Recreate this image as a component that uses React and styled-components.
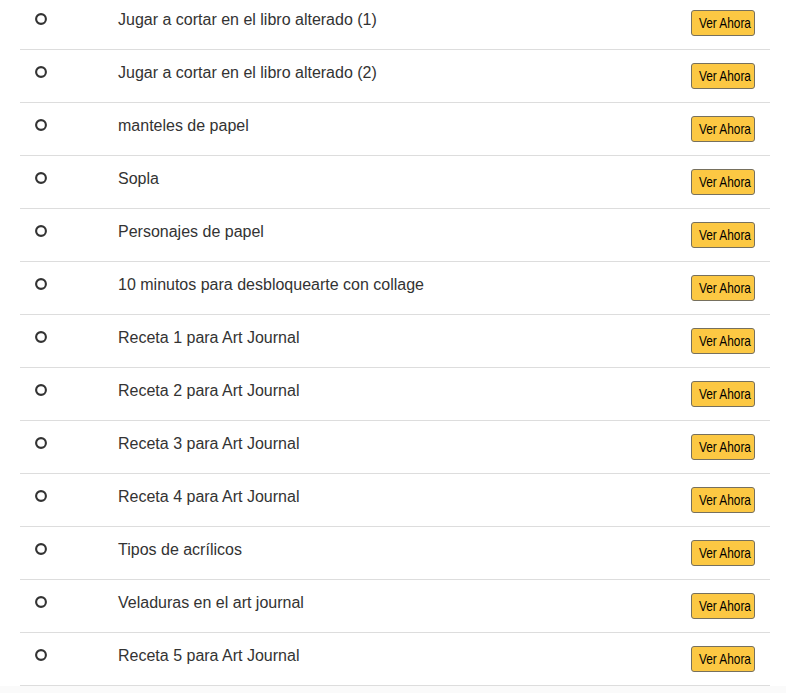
import React from "react";
import styled, { createGlobalStyle } from "styled-components";

const Global = createGlobalStyle`
  html, body { margin: 0; padding: 0; background: #ffffff; }
  body { font-family: "Liberation Sans", Arial, sans-serif; color: #333; }
`;

const Page = styled.div`
  width: 786px;
  height: 693px;
  overflow: hidden;
  background: #fafafa;
`;

const List = styled.ul`
  list-style: none;
  margin: -3px 0 0 0;
  padding: 0 16px 0 20px;
  background: #ffffff;
`;

const Row = styled.li`
  display: flex;
  align-items: flex-start;
  box-sizing: border-box;
  height: 53px;
  padding: 13px 15px 0 15px;
  border-bottom: 1px solid #dddddd;
`;

const Dot = styled.svg`
  flex: none;
  width: 12px;
  height: 12px;
  margin-top: 3px;
`;

const Title = styled.span`
  flex: 1;
  margin-left: 71px;
  font-size: 16px;
  line-height: 20px;
  color: #333333;
`;

const WatchButton = styled.button`
  flex: none;
  width: 64px;
  height: 26px;
  padding: 0;
  border: 1px solid #76705e;
  border-radius: 3px;
  background: #fcc843;
  color: #000000;
  font-family: "Liberation Sans", Arial, sans-serif;
  font-size: 15px;
  line-height: 24px;
  white-space: nowrap;
  cursor: pointer;
`;

const Narrow = styled.span`
  display: inline-block;
  transform: scaleX(0.79);
  transform-origin: center;
`;

const items = [
  "Jugar a cortar en el libro alterado (1)",
  "Jugar a cortar en el libro alterado (2)",
  "manteles de papel",
  "Sopla",
  "Personajes de papel",
  "10 minutos para desbloquearte con collage",
  "Receta 1 para Art Journal",
  "Receta 2 para Art Journal",
  "Receta 3 para Art Journal",
  "Receta 4 para Art Journal",
  "Tipos de acrílicos",
  "Veladuras en el art journal",
  "Receta 5 para Art Journal",
];

export default function App() {
  return (
    <Page>
      <Global />
      <List>
        {items.map((t) => (
          <Row key={t}>
            <Dot viewBox="0 0 12 12">
              <circle cx="6" cy="6" r="4.9" fill="none" stroke="#333" strokeWidth="2.1" />
            </Dot>
            <Title>{t}</Title>
            <WatchButton>
              <Narrow>Ver Ahora</Narrow>
            </WatchButton>
          </Row>
        ))}
      </List>
    </Page>
  );
}
